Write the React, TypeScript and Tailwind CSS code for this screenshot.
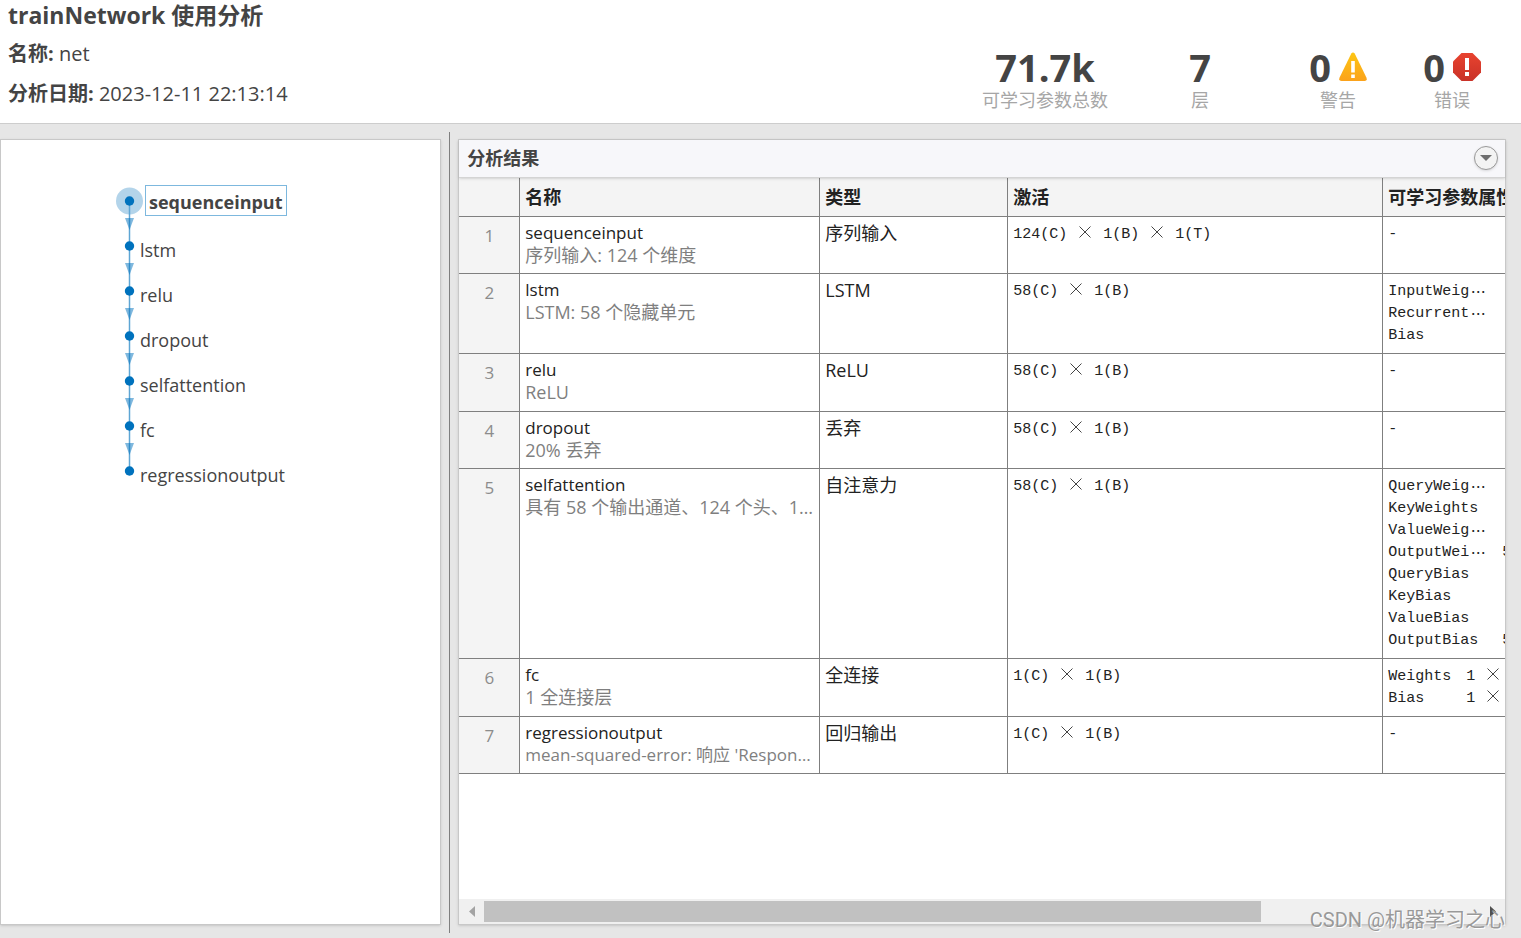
type Dim = { name: string; cut?: boolean; size?: string };

type Layer = {
  name: string;
  info: string;
  infoSize?: string;
  type: string;
  activations: string[];
  learnables: Dim[];
  height: string;
};

const layers: Layer[] = [
  {
    name: "sequenceinput",
    info: "序列输入: 124 个维度",
    type: "序列输入",
    activations: ["124(C)", "1(B)", "1(T)"],
    learnables: [],
    height: "h-[57px]",
  },
  {
    name: "lstm",
    info: "LSTM: 58 个隐藏单元",
    type: "LSTM",
    activations: ["58(C)", "1(B)"],
    learnables: [
      { name: "InputWeig", cut: true },
      { name: "Recurrent", cut: true },
      { name: "Bias" },
    ],
    height: "h-[80px]",
  },
  {
    name: "relu",
    info: "ReLU",
    type: "ReLU",
    activations: ["58(C)", "1(B)"],
    learnables: [],
    height: "h-[58px]",
  },
  {
    name: "dropout",
    info: "20% 丢弃",
    type: "丢弃",
    activations: ["58(C)", "1(B)"],
    learnables: [],
    height: "h-[57px]",
  },
  {
    name: "selfattention",
    info: "具有 58 个输出通道、124 个头、124 个键和查询通道",
    type: "自注意力",
    activations: ["58(C)", "1(B)"],
    learnables: [
      { name: "QueryWeig", cut: true },
      { name: "KeyWeights" },
      { name: "ValueWeig", cut: true },
      { name: "OutputWei", cut: true, size: "58" },
      { name: "QueryBias" },
      { name: "KeyBias" },
      { name: "ValueBias" },
      { name: "OutputBias", size: "58" },
    ],
    height: "h-[190px]",
  },
  {
    name: "fc",
    info: "1 全连接层",
    type: "全连接",
    activations: ["1(C)", "1(B)"],
    learnables: [
      { name: "Weights", size: "1" },
      { name: "Bias", size: "1" },
    ],
    height: "h-[58px]",
  },
  {
    name: "regressionoutput",
    info: "mean-squared-error: 响应 'Response' 的均方误差",
    infoSize: "text-[17px]",
    type: "回归输出",
    activations: ["1(C)", "1(B)"],
    learnables: [],
    height: "h-[57px]",
  },
];

function Times() {
  return (
    <span className="mx-[9px] inline-flex w-[18px] justify-center">
      <svg width="12" height="12" viewBox="0 0 12 12" aria-label="×">
        <path d="M.5.5l11 11M11.5.5l-11 11" stroke="#444" strokeWidth="1" />
      </svg>
    </span>
  );
}

function WarningIcon() {
  return (
    <svg width="28" height="30" viewBox="0 0 28 30">
      <defs>
        <linearGradient id="warn" x1="0" y1="0" x2="0" y2="1">
          <stop offset="0" stopColor="#fdc613" />
          <stop offset="1" stopColor="#fba21b" />
        </linearGradient>
      </defs>
      <path
        d="M12.3 1.6Q14-.8 15.7 1.6L27.4 25.6Q28.6 29 25.6 29H2.4Q-.6 29 .6 25.6Z"
        fill="url(#warn)"
      />
      <path d="M12.2 9h3.6v11.500h-3.600zM12.200 22.500h3.600v3.500h-3.600z" fill="#fff" />
    </svg>
  );
}

function ErrorIcon() {
  return (
    <svg width="28" height="28" viewBox="0 0 28 28">
      <defs>
        <linearGradient id="err" x1="0" y1="0" x2="0" y2="1">
          <stop offset="0" stopColor="#e8432f" />
          <stop offset="1" stopColor="#c93228" />
        </linearGradient>
      </defs>
      <path d="M8.500 0h11L28 8.500v11L19.500 28h-11L0 19.500v-11z" fill="url(#err)" />
      <path d="M12 5h4v12h-4zM12 19h4v4h-4z" fill="#fff" />
    </svg>
  );
}

function Stat({ value, label, width, icon }: { value: string; label: string; width: string; icon?: React.ReactNode }) {
  return (
    <div className={`flex flex-col items-center ${width}`}>
      <div className="flex h-[42px] items-center gap-2 text-[38px] leading-10 font-bold">
        {value}
        {icon}
      </div>
      <div className="text-[18px] leading-6 text-[#a6a6a6]">{label}</div>
    </div>
  );
}

function Graph() {
  const ys = layers.map((_, i) => 14 + i * 45);
  return (
    <div className="flex pt-[43px] pl-[115px]">
      <svg className="mt-1 shrink-0 overflow-visible" width="24" height="298" viewBox="0 0 24 298">
        <circle cx="13.500" cy="14" r="13.500" fill="#b3d4ea" />
        {ys.slice(1).map((y) => (
          <g key={y}>
            <path d={`M13.500 ${y - 45}v45`} stroke="#5ea6d4" strokeWidth="1.500" />
            <path d={`M9 ${y - 28}h9l-4.500 12z`} fill="#0072bd" fillOpacity=".5" />
          </g>
        ))}
        {ys.map((y) => (
          <circle key={y} cx="13.500" cy={y} r="4.700" fill="#0072bd" />
        ))}
      </svg>
      <ul className="text-[18px] leading-[28px]">
        {layers.map((layer, i) => (
          <li key={layer.name} className={i === 0 ? "h-[45px] pt-[2px] pl-[5px]" : "flex h-[45px] items-center pb-[2px]"}>
            {i === 0 ? (
              <span className="flex h-[31px] items-center border border-[#7db8de] px-[3px] pt-[2px] font-bold">
                {layer.name}
              </span>
            ) : (
              layer.name
            )}
          </li>
        ))}
      </ul>
    </div>
  );
}

function Learnables({ items }: { items: Dim[] }) {
  if (items.length === 0) return <>-</>;
  return (
    <div className="grid w-max auto-rows-[22px] grid-cols-[auto_auto] gap-x-[15px]">
      {items.map((item) => (
        <div key={item.name} className="contents">
          <span className="flex">
            {item.name}
            {item.cut && <span className="w-[18px] text-center font-['Noto_Sans_CJK_SC']">⋯</span>}
          </span>
          <span>
            {item.size}
            {item.size && <Times />}
          </span>
        </div>
      ))}
    </div>
  );
}

const head = "border-r border-b border-[#7f7f7f] px-[5px] text-left font-bold";
const cell = "border-r border-b border-[#7f7f7f] px-[5px] align-top";
const mono = "pt-[7px] font-['Liberation_Mono','Noto_Sans_CJK_SC',monospace] text-[15px]";

export default function App() {
  return (
    <div className="relative flex min-h-screen flex-col bg-[#e6e6e6] font-['Open_Sans','Noto_Sans_CJK_SC',sans-serif] text-[#444]">
      <header className="flex h-[124px] justify-between border-b border-[#cdcdcd] bg-white pr-[10px] pl-2">
        <div className="text-[20px] leading-10">
          <h1 className="mb-[3px] text-[23px] leading-[31px] font-bold">trainNetwork 使用分析</h1>
          <p>
            <b>名称:</b> net
          </p>
          <p>
            <b>分析日期:</b> 2023-12-11 22:13:14
          </p>
        </div>
        <div className="flex pt-[46px]">
          <Stat value="71.7k" label="可学习参数总数" width="w-36" />
          <Stat value="7" label="层" width="w-[166px]" />
          <Stat value="0" label="警告" width="w-[110px]" icon={<WarningIcon />} />
          <Stat value="0" label="错误" width="w-[118px]" icon={<ErrorIcon />} />
        </div>
      </header>

      <main className="flex flex-1 pt-2 pr-[15px] pb-[5px]">
        <section className="mt-[7px] mb-2 w-[29.3%] shrink-0 border border-[#c8c8c8] bg-white shadow-sm">
          <Graph />
        </section>
        <div className="mx-2 w-px shrink-0 bg-[#7f7f7f]" />
        <section className="mt-[7px] mb-2 flex min-w-0 flex-1 flex-col border border-[#c8c8c8] bg-white shadow-sm">
          <div className="relative flex h-[38px] shrink-0 items-center justify-between border-b border-[#d4d4d4] bg-[#f7f7fa] pr-[7px] pb-px pl-2 shadow-sm">
            <h2 className="text-[18px] font-bold">分析结果</h2>
            <button
              aria-label="选项"
              className="flex size-6 items-center justify-center rounded-full border border-[#999] bg-[#f3f3f3] shadow-sm"
            >
              <svg width="12" height="6" viewBox="0 0 12 6">
                <path d="M0 0h12L6 6z" fill="#6e6e6e" />
              </svg>
            </button>
          </div>

          <div className="flex-1 overflow-hidden">
            <table className="w-[1424px] table-fixed border-separate border-spacing-0 text-[17px] leading-[22px] text-[#222]">
              <colgroup>
                <col className="w-[61px]" />
                <col className="w-[300px]" />
                <col className="w-[188px]" />
                <col className="w-[375px]" />
                <col />
              </colgroup>
              <thead>
                <tr className="h-[39px] bg-[#f4f4f4] text-[18px]">
                  <th className={head}></th>
                  <th className={head}>名称</th>
                  <th className={head}>类型</th>
                  <th className={head}>激活</th>
                  <th className={head}>可学习参数属性</th>
                </tr>
              </thead>
              <tbody>
                {layers.map((layer, i) => (
                  <tr key={layer.name} className={layer.height}>
                    <td className="border-r border-b border-[#7f7f7f] bg-[#f4f4f4] pt-2 text-center align-top text-[#8c8c8c]">
                      {i + 1}
                    </td>
                    <td className={`${cell} pt-[5px]`}>
                      <div>{layer.name}</div>
                      <div className={`truncate text-[#7f7f7f] ${layer.infoSize ?? "text-[18px]"}`}>{layer.info}</div>
                    </td>
                    <td className={`${cell} pt-[5px] text-[18px]`}>{layer.type}</td>
                    <td className={`${cell} ${mono}`}>
                      {layer.activations.map((a, n) => (
                        <span key={a}>
                          {n > 0 && <Times />}
                          {a}
                        </span>
                      ))}
                    </td>
                    <td className={`${cell} ${mono}`}>
                      <Learnables items={layer.learnables} />
                    </td>
                  </tr>
                ))}
              </tbody>
            </table>
          </div>

          <div className="flex h-[25px] shrink-0 items-center bg-[#f0f0f0]">
            <button aria-label="向左滚动" className="flex w-[25px] justify-center">
              <svg width="6" height="11" viewBox="0 0 6 11">
                <path d="M6 0v11L0 5.500z" fill="#a3a3a3" />
              </svg>
            </button>
            <div className="flex-1">
              <div className="h-[21px] w-[78%] bg-[#c1c1c1]" />
            </div>
            <button aria-label="向右滚动" className="flex w-[25px] justify-center">
              <svg width="6" height="11" viewBox="0 0 6 11">
                <path d="M0 0v11l6-5.500z" fill="#505050" />
              </svg>
            </button>
          </div>
        </section>
      </main>

      <div className="pointer-events-none absolute right-4 bottom-[3px] font-['Roboto','Noto_Sans_CJK_SC',sans-serif] text-[20px] leading-[30px] text-[#999] [text-shadow:1px_1px_0_#fff]">
        CSDN @机器学习之心
      </div>
    </div>
  );
}
